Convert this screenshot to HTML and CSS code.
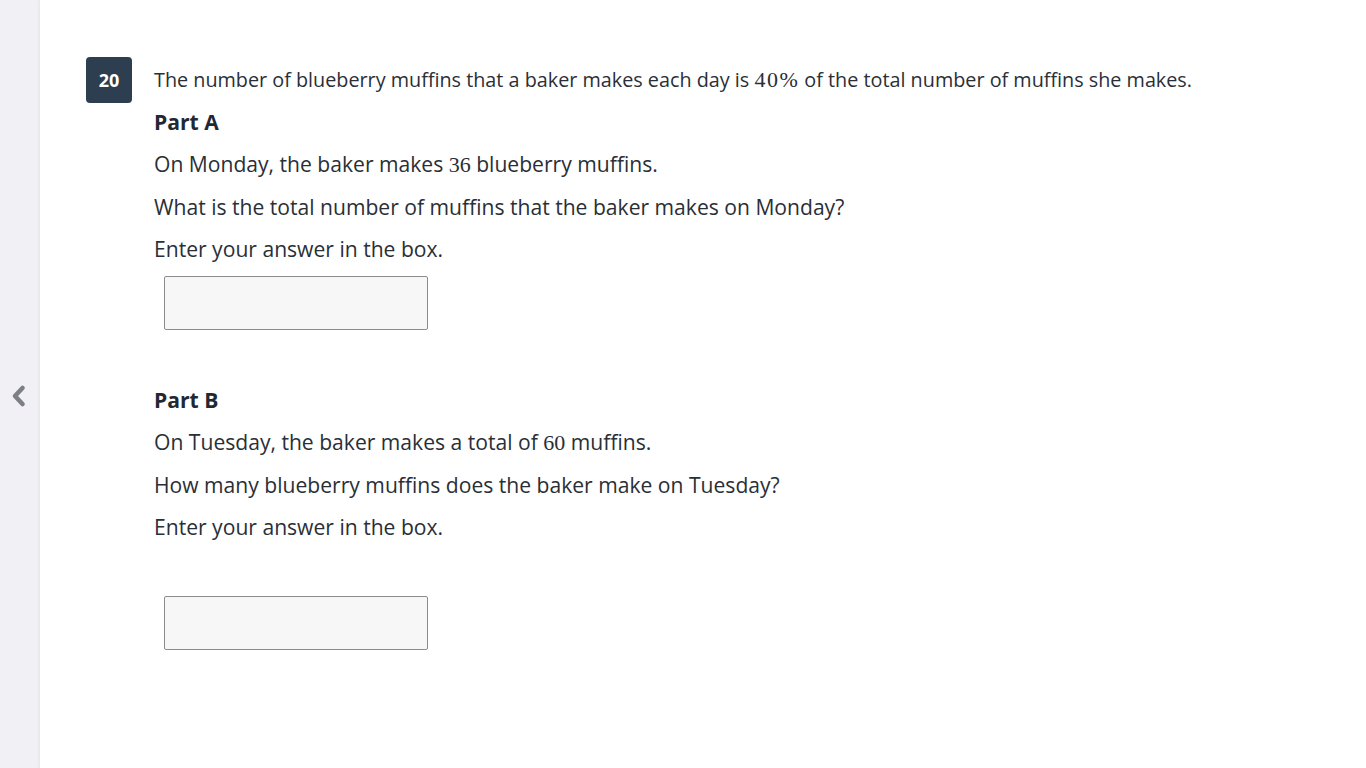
FILE: index.html
```html
<!DOCTYPE html>
<html lang="en">
<head>
<meta charset="utf-8">
<title>Question 20</title>
<link rel="stylesheet" href="styles.css">
</head>
<body>
<div class="layout">
  <aside class="sidebar">
    <button class="back" aria-label="Previous">
      <svg width="18" height="24" viewBox="0 0 18 24"><path d="M13.5 4 L6 12 L13.5 20" fill="none" stroke="#7c7f85" stroke-width="4.6" stroke-linecap="round" stroke-linejoin="round"/></svg>
    </button>
  </aside>
  <main class="main">
    <section class="question">
      <div class="badge">20</div>
      <div class="content">
        <p class="stem">The number of blueberry muffins that a baker makes each day is <span class="math pct">40%</span> of the total number of muffins she makes.</p>
        <p class="part">Part A</p>
        <p>On Monday, the baker makes <span class="math">36</span> blueberry muffins.</p>
        <p>What is the total number of muffins that the baker makes on Monday?</p>
        <p>Enter your answer in the box.</p>
        <input class="answer answer-a" type="text" aria-label="Part A answer">
        <p class="part part-b">Part B</p>
        <p>On Tuesday, the baker makes a total of <span class="math">60</span> muffins.</p>
        <p>How many blueberry muffins does the baker make on Tuesday?</p>
        <p>Enter your answer in the box.</p>
        <input class="answer answer-b" type="text" aria-label="Part B answer">
      </div>
    </section>
  </main>
</div>
</body>
</html>
```
FILE: styles.css
```css
html, body {
  margin: 0;
  padding: 0;
  height: 100%;
  background: #ffffff;
}
body {
  font-family: "Open Sans", "Noto Sans", sans-serif;
  color: #2a2f37;
}
.layout {
  display: flex;
  min-height: 100vh;
}
.sidebar {
  width: 40px;
  flex: 0 0 40px;
  background: #f1f1f5;
  box-shadow: inset -3px 0 3px -2px rgba(0,0,0,0.06);
  display: flex;
  align-items: center;
  justify-content: center;
}
.back {
  border: 0;
  background: transparent;
  padding: 0;
  margin: 0 0 -24px -4px;
  width: 18px;
  height: 24px;
  cursor: pointer;
  display: block;
}
.main {
  flex: 1;
}
.question {
  display: flex;
  align-items: flex-start;
  padding: 57px 0 0 46px;
  gap: 22px;
}
.badge {
  width: 46px;
  height: 46px;
  flex: 0 0 46px;
  background: #2c3e50;
  color: #ffffff;
  border-radius: 4px;
  font-weight: 700;
  font-size: 18px;
  display: flex;
  align-items: center;
  justify-content: center;
}
.content {
  padding-top: 9px;
}
.content p {
  margin: 0 0 14.3px;
  font-size: 21.1px;
  line-height: 28px;
}
.content p.stem {
  font-size: 19.8px;
}
.content p.part {
  font-weight: 700;
  color: #1f2833;
  margin-bottom: 13.3px;
}
.content p.part-b {
  margin-top: 56px;
}
.math {
  font-family: "Liberation Serif", "DejaVu Serif", serif;
  font-size: 22px;
}
.math.pct {
  font-size: 22px;
  letter-spacing: 1.5px;
}
.answer {
  display: block;
  box-sizing: border-box;
  width: 264px;
  height: 54px;
  margin-left: 10px;
  background: #f7f7f7;
  border: 1px solid #8c8c8c;
  border-radius: 2px;
  padding: 0 10px;
  font: inherit;
}
.answer-a {
  margin-top: -1px;
}
.answer-b {
  margin-top: 55px;
}
```
